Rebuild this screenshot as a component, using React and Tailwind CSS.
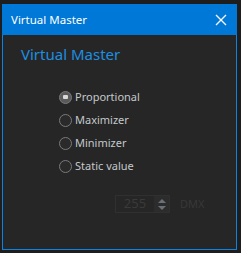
import React from 'react'

const options = ['Proportional', 'Maximizer', 'Minimizer', 'Static value']

function Radio({ checked }) {
  return (
    <span className={`relative w-[13px] h-[13px] rounded-full border border-[#7a7a7a] shrink-0 ${checked ? 'bg-[#5a5a5a]' : 'bg-[#2a2a2a]'}`}>
      {checked && <span className="absolute left-[3px] top-[3px] w-[5px] h-[4px] rounded-[1px] bg-[#d8d8d8]" />}
    </span>
  )
}

export default function App() {
  return (
    <div className="w-[241px] h-[253px] bg-[#1e1e1e] pt-[4px] pl-[2px] overflow-hidden" style={{ fontFamily: '"Noto Sans", "Open Sans", sans-serif' }}>
      <div className="w-[235px] h-[246px] flex flex-col">
        <div className="h-[31px] bg-[#0078d7] flex items-center justify-between pl-[9px] pr-[10px] text-white">
          <span className="text-[11.5px]">Virtual Master</span>
          <svg width="12" height="12" viewBox="0 0 12 12" stroke="white" strokeWidth="1.3">
            <path d="M1 1L11 11M11 1L1 11" />
          </svg>
        </div>
        <div className="flex-1 bg-[#262626] border-x border-b border-[#0a84e0] flex flex-col">
          <div className="pl-[18px] pt-[8px] text-[15px] text-[#1d8fe1] leading-[22px]">Virtual Master</div>
          <div className="pl-[56px] pt-[26px] flex flex-col gap-[10px]">
            {options.map((o, i) => (
              <label key={o} className="flex items-center gap-[3px] h-[13px] text-[11px] text-[#c4c8cc]">
                <Radio checked={i === 0} />
                <span>{o}</span>
              </label>
            ))}
          </div>
          <div className="flex items-center pl-[112px] pt-[22px] gap-[10px]">
            <div className="w-[55px] h-[18px] border border-[#303030] flex items-center">
              <span className="flex-1 text-center text-[13px] text-[#3a3a3a]">255</span>
              <span className="w-[15px] h-[16px] bg-[#2c2c2c] flex items-center justify-center">
                <svg width="8" height="11" viewBox="0 0 8 11" fill="#6a7076">
                  <path d="M4 0L8 4H0Z M0 7H8L4 11Z" />
                </svg>
              </span>
            </div>
            <span className="text-[11px] text-[#383838]">DMX</span>
          </div>
        </div>
      </div>
    </div>
  )
}
